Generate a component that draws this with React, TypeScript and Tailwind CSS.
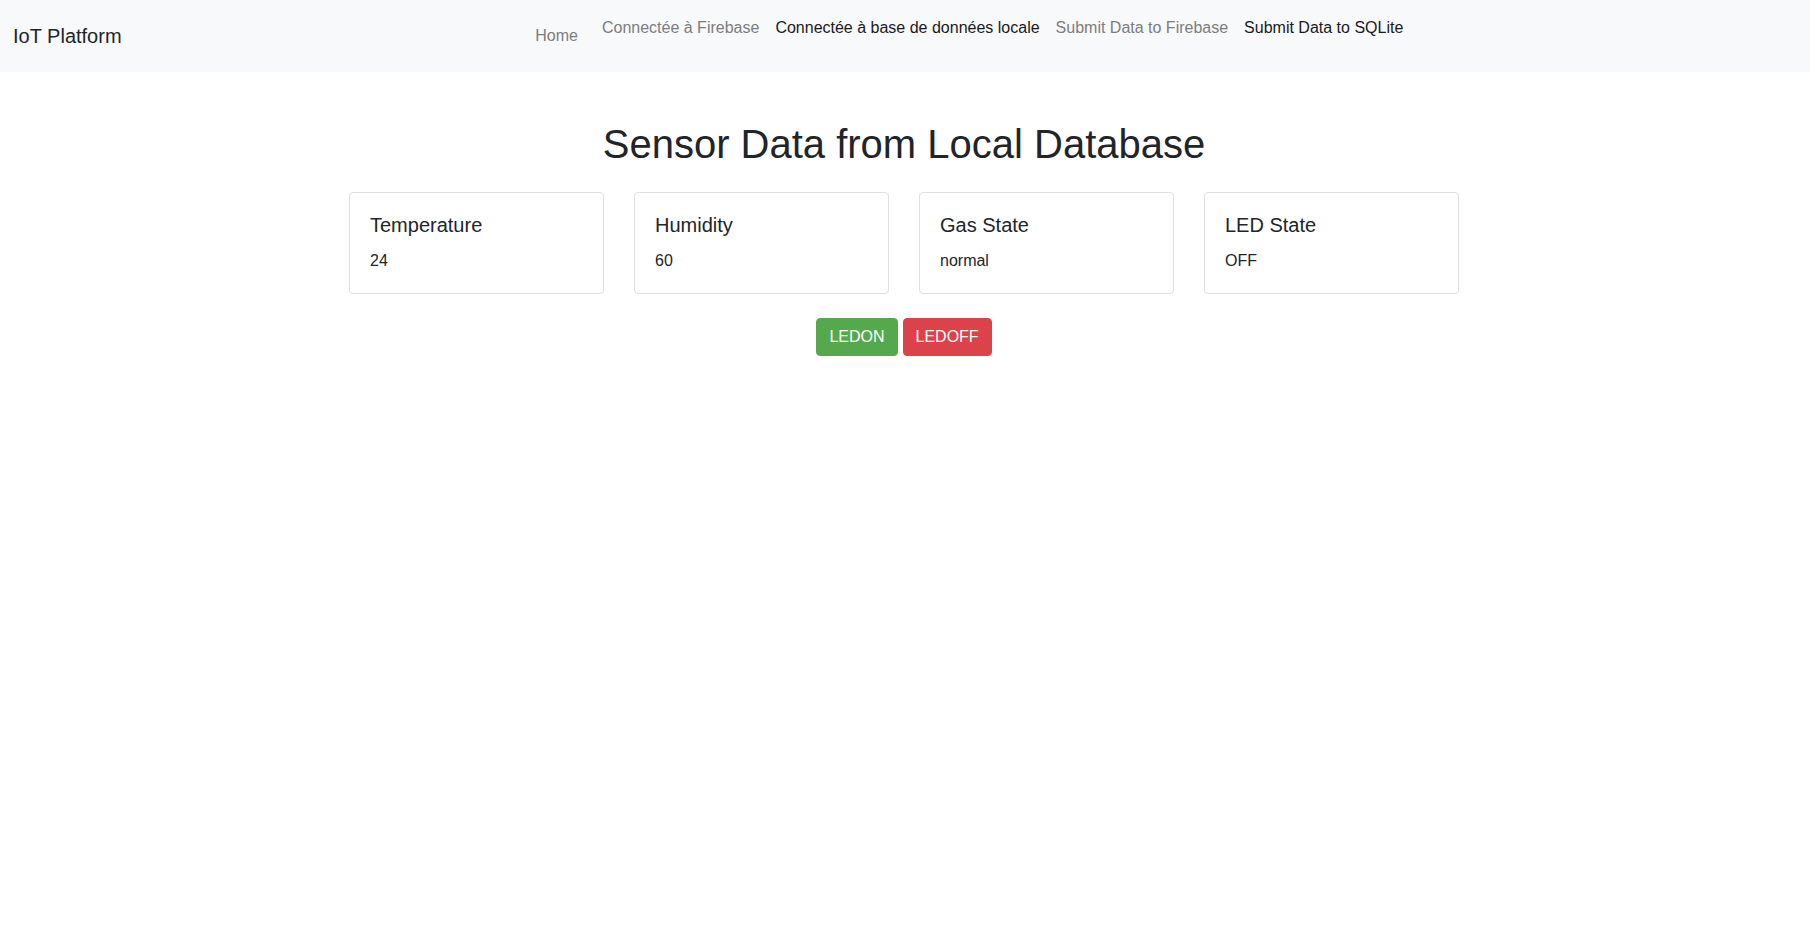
const NAV_LINKS = [
  { label: 'Connectée à Firebase', active: false },
  { label: 'Connectée à base de données locale', active: true },
  { label: 'Submit Data to Firebase', active: false },
  { label: 'Submit Data to SQLite', active: true },
];

const SENSORS = [
  { title: 'Temperature', value: '24' },
  { title: 'Humidity', value: '60' },
  { title: 'Gas State', value: 'normal' },
  { title: 'LED State', value: 'OFF' },
];

function Navbar() {
  return (
    <nav className="flex h-[72px] items-stretch bg-[#f8f9fa] pl-[13px] pr-[9px]">
      <a href="#" className="mr-4 self-center text-[20px] leading-[30px] text-[#212529]">
        IoT Platform
      </a>
      <div className="flex flex-1 justify-center">
        <a href="#" className="mr-2 self-center px-2 text-[16px] leading-6 text-[#7c7d7e]">
          Home
        </a>
        {NAV_LINKS.map((link) => (
          <a
            key={link.label}
            href="#"
            className={
              link.active
                ? 'self-start whitespace-nowrap px-2 pt-4 text-[16px] leading-6 text-[#1a1a1a]'
                : 'self-start whitespace-nowrap px-2 pt-4 text-[16px] leading-6 text-[#7c7d7e]'
            }
          >
            {link.label}
          </a>
        ))}
      </div>
    </nav>
  );
}

export default function App() {
  return (
    <div className="min-h-screen bg-white text-[#212529]" style={{ fontFamily: '"Liberation Sans", Arial, sans-serif' }}>
      <Navbar />
      <main className="mx-auto max-w-[1140px] pl-[14px] pr-[16px]">
        <h1 className="mt-12 mb-6 text-center text-[40px] leading-[48px]">Sensor Data from Local Database</h1>
        <div className="grid grid-cols-4 gap-[30px]">
          {SENSORS.map((s) => (
            <div key={s.title} className="rounded border border-[#dfdfdf] bg-white p-5">
              <h5 className="mb-3 text-[20px] leading-6">{s.title}</h5>
              <p className="text-[16px] leading-6">{s.value}</p>
            </div>
          ))}
        </div>
        <div className="mt-6 flex justify-center gap-[5px]">
          <button className="rounded border border-[#55a94c] bg-[#55a94c] px-3 py-1.5 text-[16px] leading-6 text-white">
            LEDON
          </button>
          <button className="rounded border border-[#dc4249] bg-[#dc4249] px-3 py-1.5 text-[16px] leading-6 text-white">
            LEDOFF
          </button>
        </div>
      </main>
    </div>
  );
}
